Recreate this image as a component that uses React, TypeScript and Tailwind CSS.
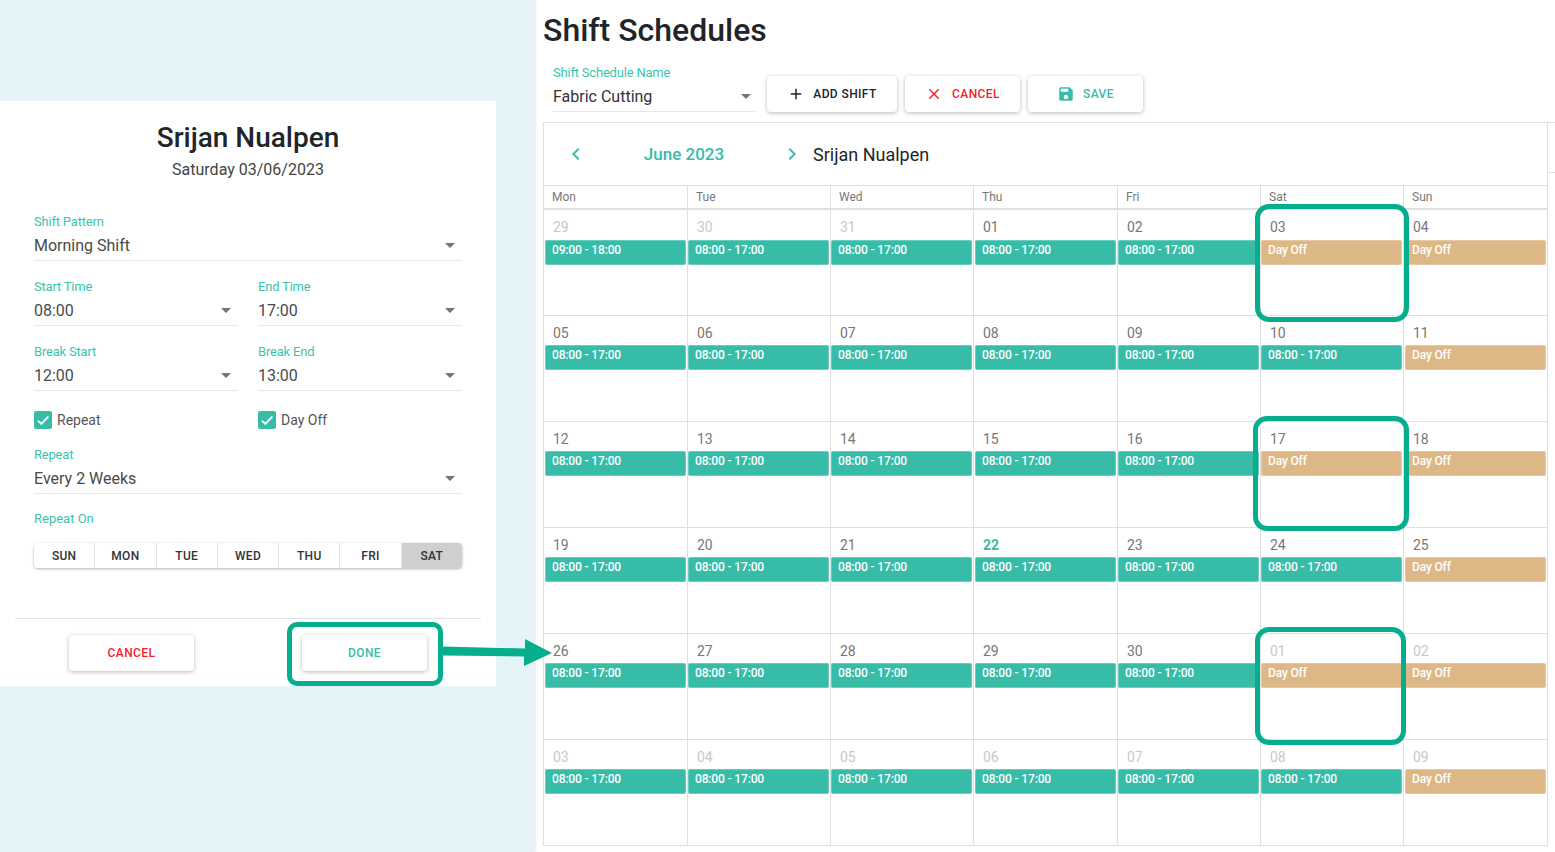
import React from 'react';

type Day = { n: string; muted?: boolean; today?: boolean; label: string };

const off = 'Day Off';
const std = '08:00 - 17:00';

const makeWeek = (nums: string[], mutedIdx: number[], labels: string[]): Day[] =>
  nums.map((n, i) => ({ n, muted: mutedIdx.includes(i), today: n === '22', label: labels[i] }));

const weeks: Day[][] = [
  makeWeek(['29', '30', '31', '01', '02', '03', '04'], [0, 1, 2], ['09:00 - 18:00', std, std, std, std, off, off]),
  makeWeek(['05', '06', '07', '08', '09', '10', '11'], [], [std, std, std, std, std, std, off]),
  makeWeek(['12', '13', '14', '15', '16', '17', '18'], [], [std, std, std, std, std, off, off]),
  makeWeek(['19', '20', '21', '22', '23', '24', '25'], [], [std, std, std, std, std, std, off]),
  makeWeek(['26', '27', '28', '29', '30', '01', '02'], [5, 6], [std, std, std, std, std, off, off]),
  makeWeek(['03', '04', '05', '06', '07', '08', '09'], [0, 1, 2, 3, 4, 5, 6], [std, std, std, std, std, std, off]),
];

const dayNames = ['Mon', 'Tue', 'Wed', 'Thu', 'Fri', 'Sat', 'Sun'];
const repeatDays = ['SUN', 'MON', 'TUE', 'WED', 'THU', 'FRI', 'SAT'];

const Caret = () => (
  <svg width="10" height="5" viewBox="0 0 10 5" className="shrink-0">
    <path d="M0 0l5 5 5-5z" fill="#757575" />
  </svg>
);

const Icon = ({ d, fill, size = 18 }: { d: string; fill: string; size?: number }) => (
  <svg width={size} height={size} viewBox="0 0 24 24" className="shrink-0">
    <path d={d} fill={fill} />
  </svg>
);

const Field = ({ label, value, className }: { label: string; value: string; className: string }) => (
  <div className={className}>
    <div className="text-[13px] leading-[15px] text-[#3cc4ab] tracking-[-0.2px]">{label}</div>
    <div className="flex items-center justify-between h-[32px] pt-[2px] pr-[7px] border-b border-[#e8e8ee]">
      <span className="text-base leading-[30px] text-[#4a4a4a]">{value}</span>
      <Caret />
    </div>
  </div>
);

const Check = ({ label, className }: { label: string; className: string }) => (
  <div className={`flex items-center gap-[5px] ${className}`}>
    <span className="flex items-center justify-center w-[18px] h-[18px] rounded-[2px] bg-[#37bca8]">
      <svg width="16" height="16" viewBox="0 0 24 24">
        <path d="M4.5 13l5 5L20 7" fill="none" stroke="#fff" strokeWidth="2.8" />
      </svg>
    </span>
    <span className="text-sm text-[#555]">{label}</span>
  </div>
);

const Btn = ({ className, children }: { className: string; children: React.ReactNode }) => (
  <div className={`flex items-center justify-center h-[36px] rounded-[4px] bg-white shadow-[0_1px_4px_rgba(0,0,0,0.28)] text-xs font-medium tracking-[0.4px] ${className}`}>
    {children}
  </div>
);

export default function App() {
  return (
    <div className="relative flex w-[1555px] h-[852px] overflow-hidden bg-white font-['Roboto',sans-serif]">
      {/* Left: edit panel */}
      <aside className="w-[534px] shrink-0 pt-[101px] bg-[#e5f4f9] shadow-[1px_0_3px_rgba(0,0,0,0.12)]">
        <div className="w-[496px] h-[585px] bg-white pt-[19px]">
          <h2 className="text-center text-[28px] leading-[36px] font-medium text-[#212529]">Srijan Nualpen</h2>
          <p className="text-center text-base leading-[24px] mt-[2px] text-[#444]">Saturday 03/06/2023</p>

          <div className="px-[34px] mt-[32px]">
            <Field label="Shift Pattern" value="Morning Shift" className="w-[428px]" />
            <div className="flex gap-[20px] mt-[18px]">
              <Field label="Start Time" value="08:00" className="w-[204px]" />
              <Field label="End Time" value="17:00" className="w-[204px]" />
            </div>
            <div className="flex gap-[20px] mt-[18px]">
              <Field label="Break Start" value="12:00" className="w-[204px]" />
              <Field label="Break End" value="13:00" className="w-[204px]" />
            </div>
            <div className="flex mt-[19px]">
              <Check label="Repeat" className="w-[224px]" />
              <Check label="Day Off" className="w-[204px]" />
            </div>
            <Field label="Repeat" value="Every 2 Weeks" className="w-[428px] mt-[17px]" />
            <div className="text-[13px] leading-[15px] text-[#3cc4ab] mt-[17px]">Repeat On</div>
            <div className="flex w-[428px] h-[25px] mt-[17px] rounded-[4px] shadow-[0_1px_3px_rgba(0,0,0,0.3)] overflow-hidden">
              {repeatDays.map((d) => (
                <div
                  key={d}
                  className={`flex-1 flex items-center justify-center text-xs font-medium tracking-[0.3px] text-[#333] ${
                    d === 'SAT' ? 'bg-[#cfcfcf]' : 'bg-white border-r border-[#e2e2e2]'
                  }`}
                >
                  {d}
                </div>
              ))}
            </div>
          </div>

          <div className="mx-[15px] mt-[50px] border-t border-[#e0e0e0]" />
          <div className="flex mt-[16px] pl-[69px] gap-[108px]">
            <Btn className="w-[125px] text-[#f5222d]">CANCEL</Btn>
            <Btn className="w-[125px] text-[#37bca8]">DONE</Btn>
          </div>
        </div>
      </aside>

      {/* Right: schedule */}
      <main className="flex-1 min-w-0 pl-[9px]">
        <h1 className="text-[32px] leading-[38px] font-medium text-[#212529] mt-[11px]">Shift Schedules</h1>
        <div className="flex items-start mt-[15px] h-[58px]">
          <div className="w-[204px] ml-[10px] mt-[1px] mr-[10px]">
            <div className="text-[13px] leading-[15px] text-[#3cc4ab] tracking-[-0.2px]">Shift Schedule Name</div>
            <div className="flex items-center justify-between h-[32px] pt-[2px] pr-[6px] border-b border-[#e8e8ee]">
              <span className="text-base text-[#333]">Fabric Cutting</span>
              <Caret />
            </div>
          </div>
          <div className="flex gap-[8px] mt-[12px]">
            <Btn className="w-[130px] gap-[8px] text-[#212529]">
              <Icon d="M19 13h-6v6h-2v-6H5v-2h6V5h2v6h6v2z" fill="#212529" />
              ADD SHIFT
            </Btn>
            <Btn className="w-[115px] gap-[9px] text-[#f5222d]">
              <Icon d="M19 6.41L17.59 5 12 10.59 6.41 5 5 6.41 10.59 12 5 17.59 6.41 19 12 13.41 17.59 19 19 17.59 13.41 12z" fill="#f5222d" />
              CANCEL
            </Btn>
            <Btn className="w-[115px] gap-[8px] text-[#37bca8]">
              <Icon d="M17 3H5c-1.11 0-2 .9-2 2v14c0 1.1.89 2 2 2h14c1.1 0 2-.9 2-2V7l-4-4zm-5 16c-1.66 0-3-1.34-3-3s1.34-3 3-3 3 1.34 3 3-1.34 3-3 3zm3-10H5V5h10v4z" fill="#37bca8" />
              SAVE
            </Btn>
          </div>
        </div>

        <div className="flex border-t border-[#e0e0e0]">
          <div className="w-[1005px] shrink-0 border-l border-[#e0e0e0]">
            <div className="flex items-center h-[63px] border-r border-b border-[#e0e0e0]">
              <div className="ml-[20px]"><Icon d="M15.41 7.41L14 6l-6 6 6 6 1.41-1.41L10.83 12z" fill="#37bca8" size={24} /></div>
              <div className="w-[192px] pt-[2px] text-center text-[17px] font-medium text-[#37bca8]">June 2023</div>
              <Icon d="M10 6L8.59 7.41 13.17 12l-4.58 4.59L10 18l6-6z" fill="#37bca8" size={24} />
              <div className="ml-[9px] pt-[1px] text-lg text-[#212529]">Srijan Nualpen</div>
            </div>
            <div className="grid grid-cols-[144px_143px_143px_144px_143px_143px_144px] h-[24px] border-b-[2px] border-[#e0e0e0]">
              {dayNames.map((d) => (
                <div key={d} className="pl-[8px] text-xs leading-[23px] text-[#777] border-r border-[#e0e0e0]">{d}</div>
              ))}
            </div>
            {weeks.map((week, w) => (
              <div key={w} className="grid grid-cols-[144px_143px_143px_144px_143px_143px_144px] h-[106px] border-b border-[#e0e0e0]">
                {week.map((day, i) => (
                  <div key={i} className="border-r border-[#e0e0e0] pl-[1px] pr-[1px] pt-[7px]">
                    <div
                      className={`pl-[8px] text-sm leading-[21px] ${w === 0 ? 'mb-[2px]' : 'mb-[1px]'} ${
                        day.today ? 'font-bold text-[#37bca8]' : day.muted ? 'text-[#c8c8c8]' : 'text-[#777]'
                      }`}
                    >
                      {day.n}
                    </div>
                    <div
                      className={`h-[25px] rounded-[2px] pl-[7px] text-xs leading-[20px] font-medium tracking-[-0.15px] text-white shadow-[inset_0_0_0_1px_rgba(255,255,255,0.25)] ${
                        i % 3 === 0 ? '' : '-ml-[1px]'
                      } ${day.label === off ? 'bg-[#ddb785]' : 'bg-[#37bca8]'}`}
                    >
                      {day.label}
                    </div>
                  </div>
                ))}
              </div>
            ))}
          </div>
          <div className="flex-1 h-[50px] border-b border-[#e0e0e0]" />
        </div>
      </main>

      {/* Annotations drawn over the screenshot */}
      <div className="absolute left-[287px] top-[622px] w-[156px] h-[64px] rounded-[10px] border-[5px] border-[#07ae8e]" />
      <div className="absolute left-[1255px] top-[204px] w-[154px] h-[118px] rounded-[14px] border-[5px] border-[#07ae8e]" />
      <div className="absolute left-[1253px] top-[416px] w-[156px] h-[115px] rounded-[14px] border-[5px] border-[#07ae8e]" />
      <div className="absolute left-[1255px] top-[627px] w-[151px] h-[118px] rounded-[14px] border-[5px] border-[#07ae8e]" />
      <svg className="absolute left-[440px] top-[636px]" width="114" height="34" viewBox="0 0 114 34">
        <path d="M3 10.5L85 12.5V3L112 17 84 30V20.5L3 19.5z" fill="#07ae8e" />
      </svg>
    </div>
  );
}
